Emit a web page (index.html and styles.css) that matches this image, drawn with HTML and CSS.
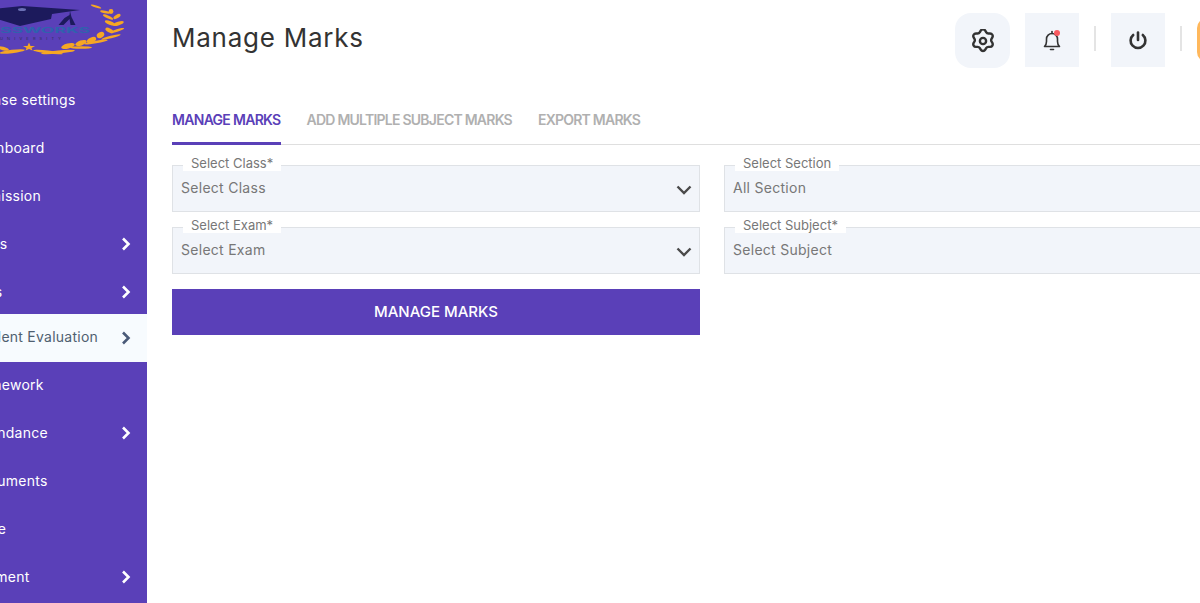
FILE: index.html
```html
<!DOCTYPE html>
<html lang="en">
<head>
<meta charset="utf-8">
<title>Manage Marks</title>
<link rel="stylesheet" href="styles.css">
</head>
<body>
<div class="page">
  <aside class="sidebar">
    <div class="logo">
      <svg width="147" height="76" viewBox="0 0 147 76">
        <g class="laurel">
          <ellipse cx="96" cy="6.500" rx="5.500" ry="1.100" transform="rotate(18 96 6.500)"/>
          <ellipse cx="105" cy="12" rx="5" ry="1.300" transform="rotate(12 105 12)"/>
          <circle cx="111" cy="11.500" r="2.400"/>
          <ellipse cx="108" cy="17" rx="5.500" ry="1.500" transform="rotate(24 108 17)"/>
          <ellipse cx="117" cy="16.500" rx="4" ry="1.800" transform="rotate(-30 117 16.500)"/>
          <ellipse cx="110" cy="23" rx="5.500" ry="1.800" transform="rotate(22 110 23)"/>
          <ellipse cx="118.500" cy="23.500" rx="5.500" ry="1.800" transform="rotate(-18 118.500 23.500)"/>
          <ellipse cx="109.500" cy="30.500" rx="4.500" ry="2" transform="rotate(28 109.500 30.500)"/>
          <ellipse cx="117" cy="30.500" rx="7.500" ry="1.300" transform="rotate(-17 117 30.500)"/>
          <ellipse cx="100.500" cy="35" rx="4" ry="2.800" transform="rotate(-30 100.500 35)"/>
          <ellipse cx="111" cy="37" rx="10" ry="1.300" transform="rotate(-14 111 37)"/>
          <ellipse cx="91.500" cy="40" rx="5" ry="2.600" transform="rotate(-25 91.500 40)"/>
          <ellipse cx="96" cy="42" rx="12" ry="1.300" transform="rotate(-10 96 42)"/>
          <ellipse cx="81" cy="43" rx="6" ry="2.500" transform="rotate(-18 81 43)"/>
          <ellipse cx="81" cy="47.500" rx="11" ry="1.300"/>
          <ellipse cx="68" cy="46" rx="7" ry="2.500" transform="rotate(-15 68 46)"/>
          <ellipse cx="58" cy="52" rx="17" ry="1.600" transform="rotate(-5 58 52)"/>
          <ellipse cx="48" cy="52" rx="15" ry="1.500" transform="rotate(7 48 52)"/>
          <ellipse cx="12" cy="51.500" rx="13" ry="1.700" transform="rotate(-7 12 51.500)"/>
          <ellipse cx="3" cy="48.500" rx="6" ry="1.700" transform="rotate(14 3 48.500)"/>
          <path d="M23 46h4.500l1.500-3.500 1.500 3.500h4.500l-3.500 2 1 2.500-3.500-1.500-3.500 1.500 1-2.500z"/>
        </g>
        <path class="cap" d="M-6 9L22 6L80 10L52 14L51 19L20 26L-3 19z"/>
        <path class="cap" d="M70 11l1.500 6 4 8h-5l-1-6-6 6h-5l6-7 5-3z"/>
        <ellipse cx="22" cy="9.500" rx="4" ry="1.500" fill="#6b70b5"/>
        <text x="0" y="32.500" class="logo-name" textLength="90" lengthAdjust="spacingAndGlyphs">SSWORKS</text>
        <text x="0" y="40" class="logo-sub" textLength="61">UNIVERSITY</text>
      </svg>
    </div>
    <nav class="menu">
      <a class="item"><span class="label">Phrase settings</span></a>
      <a class="item"><span class="label">Dashboard</span></a>
      <a class="item"><span class="label">Admission</span></a>
      <a class="item"><span class="label">Class</span><svg class="chev" viewBox="0 0 10 14"><path d="M2 1.500l5.500 5.500-5.500 5.500"/></svg></a>
      <a class="item"><span class="label">Fees</span><svg class="chev" viewBox="0 0 10 14"><path d="M2 1.500l5.500 5.500-5.500 5.500"/></svg></a>
      <a class="item active"><span class="label">Student Evaluation</span><svg class="chev" viewBox="0 0 10 14"><path d="M2 1.500l5.500 5.500-5.500 5.500"/></svg></a>
      <a class="item"><span class="label">Homework</span></a>
      <a class="item"><span class="label">Attendance</span><svg class="chev" viewBox="0 0 10 14"><path d="M2 1.500l5.500 5.500-5.500 5.500"/></svg></a>
      <a class="item"><span class="label">Documents</span></a>
      <a class="item"><span class="label">Store</span></a>
      <a class="item"><span class="label">Payment</span><svg class="chev" viewBox="0 0 10 14"><path d="M2 1.500l5.500 5.500-5.500 5.500"/></svg></a>
    </nav>
  </aside>
  <main class="main">
    <header class="topbar">
      <h1 class="title">Manage Marks</h1>
      <div class="actions">
        <button class="icon-btn round">
          <svg width="24" height="24" viewBox="2 2 20 20" fill="none" stroke="#333" stroke-width="2" stroke-linejoin="round"><path d="M10.100 3.400a2.200 2.200 0 0 1 3.800 0l.7 1.200a2.200 2.200 0 0 0 1.900 1.100h1.400a2.200 2.200 0 0 1 1.900 3.300l-.7 1.200a2.200 2.200 0 0 0 0 2.200l.7 1.200a2.200 2.200 0 0 1-1.900 3.300h-1.400a2.200 2.200 0 0 0-1.900 1.100l-.7 1.200a2.200 2.200 0 0 1-3.800 0l-.7-1.200a2.200 2.200 0 0 0-1.900-1.100H6.100a2.200 2.200 0 0 1-1.900-3.300l.7-1.200a2.200 2.200 0 0 0 0-2.200l-.7-1.200a2.200 2.200 0 0 1 1.900-3.300h1.400a2.200 2.200 0 0 0 1.900-1.100z"/><circle cx="12" cy="12" r="2.600"/></svg>
        </button>
        <button class="icon-btn">
          <svg width="24" height="24" viewBox="0 0 24 24" fill="none" stroke="#333" stroke-width="1.600" stroke-linecap="round" stroke-linejoin="round"><path d="M4.500 18.500c1.500-1.500 2-2.500 2-5v-2.500a5.500 5.500 0 0 1 11 0v2.500c0 2.500.5 3.500 2 5z"/><path d="M12 3.500v2"/><path d="M10.500 21.500h3"/><circle cx="17" cy="5" r="3" fill="#f8595f" stroke="none"/></svg>
        </button>
        <span class="divider"></span>
        <button class="icon-btn">
          <svg width="24" height="24" viewBox="0 0 24 24" fill="none" stroke="#333" stroke-width="2.600" stroke-linecap="round"><path d="M12 4.500v7.500"/><path d="M7.200 7a7.400 7.400 0 1 0 9.600 0"/></svg>
        </button>
        <span class="divider"></span>
        <span class="avatar"></span>
      </div>
    </header>
    <div class="tabs">
      <a class="tab on">MANAGE MARKS</a>
      <a class="tab">ADD MULTIPLE SUBJECT MARKS</a>
      <a class="tab">EXPORT MARKS</a>
    </div>
    <form class="form">
      <div class="field">
        <span class="legend">Select Class*</span>
        <span class="value">Select Class</span>
        <svg class="down" viewBox="0 0 16 10"><path d="M1.500 1.500l6.500 6.500 6.500-6.500"/></svg>
      </div>
      <div class="field">
        <span class="legend">Select Section</span>
        <span class="value">All Section</span>
      </div>
      <div class="field">
        <span class="legend">Select Exam*</span>
        <span class="value">Select Exam</span>
        <svg class="down" viewBox="0 0 16 10"><path d="M1.500 1.500l6.500 6.500 6.500-6.500"/></svg>
      </div>
      <div class="field">
        <span class="legend">Select Subject*</span>
        <span class="value">Select Subject</span>
      </div>
      <button type="button" class="submit">MANAGE MARKS</button>
    </form>
  </main>
</div>
</body>
</html>
```
FILE: styles.css
```css
* { box-sizing: border-box; }
html, body { margin: 0; height: 100%; overflow: hidden; background: #fff; }
body { font-family: Inter, "Open Sans", sans-serif; color: #333; }
.page { display: flex; width: 1252px; height: 603px; }
.sidebar { flex: 0 0 147px; background: #5a40b8; overflow: hidden; display: flex; flex-direction: column; }
.logo { height: 76px; flex: none; }
.logo svg { display: block; }
.laurel { fill: #f6a723; filter: blur(0.3px); }
.cap { fill: #1c1a5c; filter: blur(0.4px); }
.logo-name { font: 700 7px Inter, sans-serif; fill: #2f62ad; }
.logo-sub { font: 400 4px Inter, sans-serif; fill: #2d2d58; }
.menu { display: flex; flex-direction: column; }
.item { height: 48px; flex: none; display: flex; align-items: center; justify-content: space-between; padding: 0 16px 0 0; color: #fff; font-size: 14px; margin-left: -30px; }
.label { white-space: nowrap; letter-spacing: 0.250px; position: relative; top: -1px; }
.item.active { background: #f7fbfe; color: #4f6070; margin-top: -2px; height: 47px; box-shadow: 0 1px 0 #f7fbfe; }
.chev { width: 10px; height: 14px; fill: none; stroke: #fff; stroke-width: 2.600; }
.active .chev { stroke: #4a5a78; }
.main { flex: 0 0 1105px; padding-left: 25px; display: flex; flex-direction: column; }
.topbar { display: flex; justify-content: space-between; align-items: flex-start; height: 90px; padding-top: 13px; }
.title { margin: 9px 0 0; font-size: 26px; line-height: 32px; font-weight: 400; color: #333; letter-spacing: 0.750px; }
.actions { display: flex; align-items: flex-start; }
.icon-btn { width: 54px; height: 54px; border: 0; padding: 0; background: #f2f5fa; display: flex; align-items: center; justify-content: center; }
.icon-btn.round { width: 55px; height: 55px; border-radius: 16px; margin-right: 15px; }
.divider { width: 2px; height: 25px; background: #e4e4e4; margin: 13px 15px 0; }
.avatar { width: 55px; height: 44px; margin-top: 5px; border-radius: 10px; background: #ffb85c; }
.tabs { display: flex; gap: 26px; height: 42px; border-bottom: 1px solid #dfdfdf; margin-top: 13px; align-items: stretch; }
.tab { font-size: 14px; font-weight: 600; color: #b0b0b0; padding-top: 8px; margin-bottom: -1px; letter-spacing: -0.760px; border-bottom: 3px solid transparent; }
.tab.on { color: #5a40b8; border-bottom-color: #5a40b8; letter-spacing: -0.700px; }
.form { display: grid; grid-template-columns: 528px 528px; column-gap: 24px; row-gap: 15px; margin-top: 20px; }
.field { position: relative; height: 47px; background: #f2f5fa; border: 1px solid #dfe2e6; display: flex; align-items: center; padding: 0 8px; }
.legend { position: absolute; left: 10px; top: -10px; height: 15px; padding: 0 8px; background: #fff; font-size: 13px; line-height: 15px; color: #777; white-space: nowrap; }
.value { font-size: 14px; color: #777; letter-spacing: 0.280px; position: relative; top: -1px; }
.down { position: absolute; right: 7px; top: 19px; width: 16px; height: 10px; fill: none; stroke: #4a4a4a; stroke-width: 2.400; }
.submit { height: 46px; border: 0; padding: 0 0 2px; background: #5a40b8; color: #fff; font: 500 15px Inter, sans-serif; }
```
